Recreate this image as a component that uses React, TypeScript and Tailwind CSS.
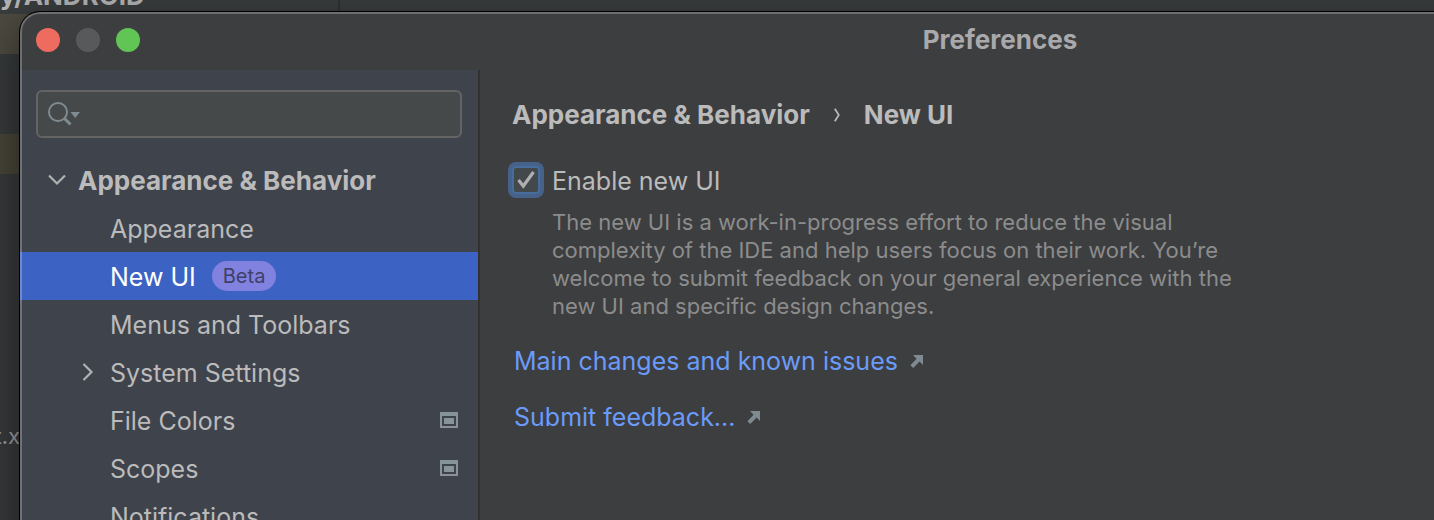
import { useState } from "react";

interface TreeItem {
    label: string;
    badge?: string;
    expandable?: boolean;
    projectLevel?: boolean;
}

const items: TreeItem[] = [
    { label: "Appearance" },
    { label: "New UI", badge: "Beta" },
    { label: "Menus and Toolbars" },
    { label: "System Settings", expandable: true },
    { label: "File Colors", projectLevel: true },
    { label: "Scopes", projectLevel: true },
    { label: "Notifications" },
];

function SearchIcon() {
    return (
        <svg width="34" height="28" viewBox="0 0 34 28" fill="none" aria-hidden="true" className="shrink-0">
            <circle cx="10" cy="12" r="9" stroke="#7f8b91" strokeWidth="2" />
            <path d="M16.5 18.5 L22.5 24.5" stroke="#7f8b91" strokeWidth="3" />
            <path d="M22.5 12 H32 L27.2 18 Z" fill="#7f8b91" />
        </svg>
    );
}

function ProjectIcon() {
    return (
        <svg width="18" height="16" viewBox="0 0 18 16" aria-hidden="true">
            <path fillRule="evenodd" fill="#87939a" d="M0 0H18V16H0Z M2 4V14H16V4Z" />
            <path fill="#87939a" d="M4 6H14V12H4Z" />
        </svg>
    );
}

function ExternalIcon() {
    return (
        <svg width="14" height="14" viewBox="0 0 14 14" aria-hidden="true">
            <path fill="#7f8b91" d="M3 1H13V11L9.6 7.6L3.2 14L0.4 11.2L6.6 4.8Z" />
        </svg>
    );
}

// Editor window, mostly covered by the dialog
function Backdrop() {
    return (
        <div className="flex h-full flex-col bg-[#36393a]">
            <div className="flex h-3.5 shrink-0 items-end overflow-hidden bg-[#3a3d3e]">
                <div className="h-full w-[340px] border-r-2 border-[#2f3132]">
                    <p className="-mt-5 text-[26px] leading-8 font-bold text-[#b4b4b4]">y/ANDROID</p>
                </div>
            </div>
            <div className="h-10 shrink-0 bg-[#4d4a40]" />
            <div className="h-20 shrink-0" />
            <div className="h-10 shrink-0 bg-[#474437]" />
            <div className="flex w-5 grow justify-end pt-[246px]">
                <span className="text-[22px] leading-8 text-[#9a9a9a]">t.x</span>
            </div>
        </div>
    );
}

function Sidebar() {
    const [query, setQuery] = useState("");
    const [selected, setSelected] = useState("New UI");

    return (
        <aside className="w-[460px] shrink-0 border-r-2 border-[#323232] bg-[#3f434c] pt-5">
            <div className="mr-4 mb-[18px] ml-4 flex h-12 items-center rounded-md border-2 border-[#646464] bg-[#45494a] pl-2.5">
                <SearchIcon />
                <input
                    type="text"
                    aria-label="Search settings"
                    value={query}
                    onChange={(e) => setQuery(e.target.value)}
                    className="h-full min-w-0 grow bg-transparent px-2 outline-none"
                />
            </div>

            <button type="button" className="flex h-12 w-full items-center pl-7 text-left text-[26px] font-bold">
                <svg width="18" height="12" viewBox="0 0 18 12" fill="none" aria-hidden="true">
                    <path d="M1 1.5 L9 9.5 L17 1.5" stroke="#afb1b3" strokeWidth="2.2" />
                </svg>
                <span className="pl-3">Appearance &amp; Behavior</span>
            </button>

            <ul>
                {items.map((item) => (
                    <li key={item.label}>
                        <button
                            type="button"
                            onClick={() => setSelected(item.label)}
                            className={`flex h-12 w-full items-center pr-5 text-left ${
                                selected === item.label ? "bg-[#3c63c4] text-white" : ""
                            }`}
                        >
                            <span className="flex w-[90px] justify-end pr-4">
                                {item.expandable && (
                                    <svg width="12" height="18" viewBox="0 0 12 18" fill="none" aria-hidden="true">
                                        <path d="M1.5 1 L9.5 9 L1.5 17" stroke="#afb1b3" strokeWidth="2.2" />
                                    </svg>
                                )}
                            </span>
                            <span className="pt-1">{item.label}</span>
                            {item.badge && (
                                <span className="ml-4 rounded-full bg-[#8182df] px-[11px] text-xl leading-[30px] text-[#3f4069]">
                                    {item.badge}
                                </span>
                            )}
                            {item.projectLevel && (
                                <span className="ml-auto">
                                    <ProjectIcon />
                                </span>
                            )}
                        </button>
                    </li>
                ))}
            </ul>
        </aside>
    );
}

function NewUiPage() {
    const [enabled, setEnabled] = useState(true);

    return (
        <main className="flex grow flex-col items-start pt-7 pl-8">
            <h2 className="flex items-center gap-6 text-[26px] leading-[34px] font-bold">
                <span>Appearance &amp; Behavior</span>
                <svg width="6" height="14" viewBox="0 0 6 14" fill="none" aria-hidden="true">
                    <path d="M0.8 0.8 L4.8 7 L0.8 13.2" stroke="#bbbbbb" strokeWidth="1.7" />
                </svg>
                <span>New UI</span>
            </h2>

            <label className="mt-8 flex h-8 items-center gap-3">
                <span className="grid size-7 place-items-center rounded-sm border-2 border-[#466d9b] bg-[#43494a] ring-4 ring-[#46618a]">
                    <input
                        type="checkbox"
                        checked={enabled}
                        onChange={(e) => setEnabled(e.target.checked)}
                        className="peer col-start-1 row-start-1 size-6 appearance-none outline-none"
                    />
                    <svg
                        width="24"
                        height="24"
                        viewBox="0 0 24 24"
                        fill="none"
                        aria-hidden="true"
                        className="pointer-events-none invisible col-start-1 row-start-1 peer-checked:visible"
                    >
                        <path d="M4.5 12 L9.3 18 L19.5 4" stroke="#afafaf" strokeWidth="3.2" />
                    </svg>
                </span>
                <span className="pt-1">Enable new UI</span>
            </label>
            <p className="mt-3 ml-10 w-[700px] text-[22px] leading-7 text-[#8c8c8c]">
                The new UI is a work-in-progress effort to reduce the visual complexity of the IDE and help users focus
                on their work. You’re welcome to submit feedback on your general experience with the new UI and specific
                design changes.
            </p>

            <div className="flex flex-col items-start gap-6 pt-[25px] pl-0.5 leading-8 text-[#6b9bfa]">
                <a href="#changes" className="flex items-center gap-3">
                    Main changes and known issues
                    <ExternalIcon />
                </a>
                <a href="#feedback" className="flex items-center gap-3">
                    Submit feedback...
                    <ExternalIcon />
                </a>
            </div>
        </main>
    );
}

export default function App() {
    return (
        <div className="relative h-screen overflow-hidden font-['Inter','Liberation_Sans',sans-serif] text-[25px] text-[#bbbbbb]">
            <Backdrop />
            {/* The dialog runs past the right and bottom edges of the screen */}
            <div className="absolute top-3 -right-[546px] -bottom-10 left-5 flex flex-col overflow-hidden rounded-tl-[20px] bg-[#3d3e40] shadow-[0_0_0_1px_#000,0_10px_40px_rgba(0,0,0,0.5)]">
                <header className="grid h-[58px] shrink-0 grid-cols-[1fr_auto_1fr] items-center pb-0.5">
                    <div className="flex gap-4 pl-4">
                        <button type="button" aria-label="Close" className="size-6 rounded-full bg-[#ed6b5f]" />
                        <button type="button" aria-label="Minimize" className="size-6 rounded-full bg-[#58595b]" />
                        <button type="button" aria-label="Zoom" className="size-6 rounded-full bg-[#61c555]" />
                    </div>
                    <h1 className="text-[26px] leading-8 font-bold text-[#a9a9ab]">Preferences</h1>
                </header>
                <div className="flex grow">
                    <Sidebar />
                    <NewUiPage />
                </div>
                <div className="pointer-events-none absolute inset-0 rounded-tl-[20px] border-t-2 border-l-2 border-white/25" />
            </div>
        </div>
    );
}
